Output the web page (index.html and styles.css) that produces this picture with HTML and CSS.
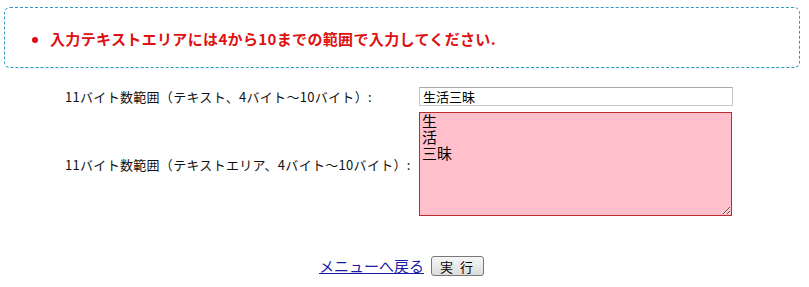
FILE: index.html
```html
<!DOCTYPE html>
<html>
<head>
  <meta charset="utf-8">
  <title>バイト数範囲チェック</title>
  <link rel="stylesheet" href="styles.css">
</head>
<body>
  <div class="errors">
    <ul>
      <li>入力テキストエリアには4から10までの範囲で入力してください.</li>
    </ul>
  </div>

  <form class="form-grid">
    <label class="label" for="text1">11バイト数範囲（テキスト、4バイト～10バイト）:</label>
    <input class="text-input" type="text" id="text1" value="生活三昧">

    <label class="label" for="area1">11バイト数範囲（テキストエリア、4バイト～10バイト）:</label>
    <textarea class="text-area" id="area1">生
活
三昧</textarea>
  </form>

  <div class="actions">
    <a href="#" class="back-link">メニューへ戻る</a>
    <button type="button" class="run-button">実 行</button>
  </div>
</body>
</html>
```

FILE: styles.css
```css
body {
  margin: 0;
  font-family: "Noto Sans CJK JP", "DejaVu Sans", sans-serif;
  color: #111;
  background-color: #fff;
}

.errors {
  margin: 7px 9px 0 4px;
  height: 59px;
  border: 1px dashed #2f98c0;
  border-radius: 6px;
  display: flex;
  align-items: center;
}

.errors ul {
  margin: 2px 0 0 0;
  padding-left: 45px;
  color: #dd1111;
  font-size: 15px;
  font-weight: bold;
  letter-spacing: 0.35px;
}

.form-grid {
  display: grid;
  grid-template-columns: 354px 314px;
  row-gap: 6px;
  margin: 19px 0 0 65px;
  align-items: center;
}

.label {
  font-size: 13px;
  letter-spacing: 0.3px;
}

.text-input {
  box-sizing: border-box;
  width: 314px;
  height: 19px;
  margin: 0;
  padding: 0 3px;
  border: 1px solid #c8c8c8;
  border-top-color: #a8a8a8;
  font-family: inherit;
  font-size: 13px;
  color: #000;
}

.text-area {
  box-sizing: border-box;
  width: 313px;
  height: 104px;
  margin: 0;
  padding: 0 2px;
  border: 1px solid #c0282c;
  background-color: #ffc0cb;
  font-family: inherit;
  font-size: 15px;
  line-height: 16px;
  color: #000;
}

.actions {
  display: flex;
  justify-content: center;
  align-items: center;
  gap: 7px;
  margin-top: 39px;
  padding-right: 6px;
}

.back-link {
  color: #1a1aa6;
  font-size: 15px;
}

.run-button {
  width: 53px;
  height: 20px;
  padding: 0;
  border: 1px solid #777;
  border-radius: 3px;
  background: linear-gradient(#f6f6f6, #dcdcdc);
  font-family: inherit;
  font-size: 13px;
  letter-spacing: 2px;
  color: #000;
}
```
